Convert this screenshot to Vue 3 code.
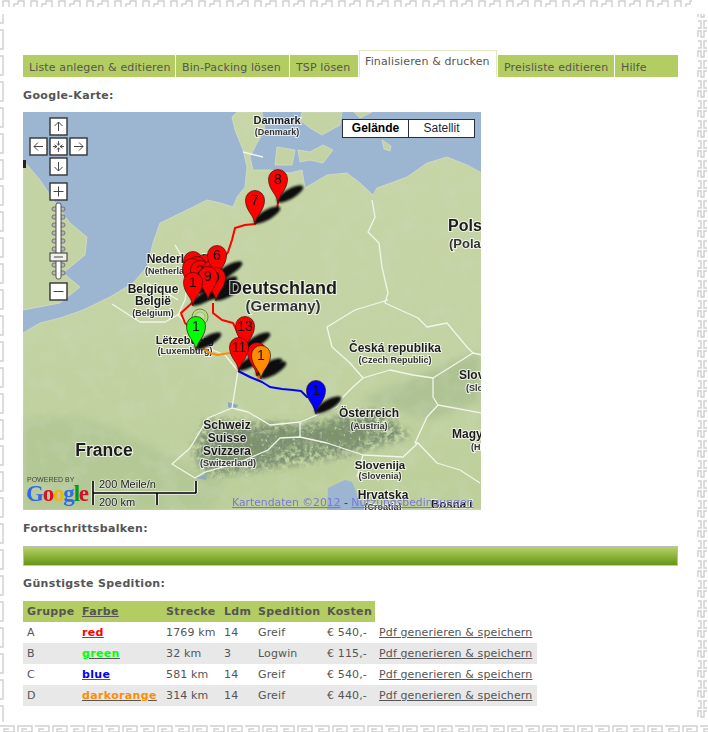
<script setup>
const tabs = [
  { label: 'Liste anlegen & editieren', width: 152 },
  { label: 'Bin-Packing lösen', width: 113 },
  { label: 'TSP lösen', width: 68 },
  { label: 'Finalisieren & drucken', width: 138, active: true },
  { label: 'Preisliste editieren', width: 116 },
  { label: 'Hilfe', width: 63 },
]

const rows = [
  { group: 'A', color: 'red', tone: '#ff0000', route: '1769 km', ldm: 14, carrier: 'Greif', cost: '€ 540,-' },
  { group: 'B', color: 'green', tone: '#00ff00', route: '32 km', ldm: 3, carrier: 'Logwin', cost: '€ 115,-' },
  { group: 'C', color: 'blue', tone: '#0000ff', route: '581 km', ldm: 14, carrier: 'Greif', cost: '€ 540,-' },
  { group: 'D', color: 'darkorange', tone: '#ff8c00', route: '314 km', ldm: 14, carrier: 'Greif', cost: '€ 440,-' },
]

// tip of every pin in page coordinates, the map viewBox starts at 23/112
const pins = [
  { x: 278, y: 203, n: '8', c: '#ff0000' },
  { x: 255, y: 224, n: '7', c: '#ff0000' },
  { x: 193, y: 285, n: '', c: '#ff0000' },
  { x: 205, y: 288, n: '', c: '#ff0000' },
  { x: 197, y: 290, n: '', c: '#ff0000' },
  { x: 192, y: 292, n: '', c: '#ff0000' },
  { x: 200, y: 294, n: '2', c: '#ff0000' },
  { x: 212, y: 294, n: '', c: '#ff0000' },
  { x: 217, y: 279, n: '6', c: '#ff0000' },
  { x: 216, y: 301, n: '0', c: '#ff0000' },
  { x: 208, y: 300, n: '9', c: '#ff0000' },
  { x: 193, y: 306, n: '1', c: '#ff0000' },
  { x: 245, y: 350, n: '13', c: '#ff0000' },
  { x: 257, y: 376, n: '', c: '#ff0000' },
  { x: 239, y: 371, n: '11', c: '#ff0000' },
  { x: 261, y: 379, n: '1', c: '#ff8c00' },
  { x: 196, y: 350, n: '1', c: '#00ff00' },
  { x: 316, y: 414, n: '1', c: '#0000ff' },
]

const toPath = (points) => 'M' + points.replace(/ M/g, 'M').replace(/ /g, 'L')

const continent = 'M23 333 40 323 60 318 83 310 110 297 133 283 147 267 153 243 160 223 187 210 207 200 220 203 233 207 237 197 245 187 247 167 243 150 235 130 232 117 237 112H262L265 130 257 143 250 157 253 170 270 170 290 173 302 170 305 188 327 175 347 173 360 183 373 195 377 188 407 177 427 163 447 157 467 165 482 173V510H23Z'
const alps = 'M206 420 300 425 378 410 412 436 345 456 262 470 206 476 192 450Z'

const redRoute = toPath('278,202 277,210 273,212 266,213 262,218 255,224 245,225 235,228 232,240 228,252 224,258 217,278 M213,303 213,313 222,320 233,323 238,333 245,350 M193,305 192,303 181,313 185,323 193,330 M245,350 241,358 239,370')
const orangeRoute = toPath('203,348 208,352 217,355 230,353 239,350 M257,373 258,379 261,378')
const blueRoute = toPath('238,371 250,377 262,382 270,387 282,389 293,390 301,391 307,397 315,398 313,404 316,412')
const borders = [
  '372,200 375,217 368,232 379,243 382,267 388,293 385,303 418,318 427,327 447,323 467,347 473,353 457,363 433,378 413,375 390,370 363,378 350,363 332,347 327,327 355,310 388,300',
  '363,378 353,387 343,397 337,407 317,415 300,422 270,425 248,412 232,408 238,371 225,355 203,346 192,330 178,315 185,300 190,270 175,245',
  '147,283 165,292 178,300 M181,313 165,322 140,322 112,304',
  '232,408 208,418 190,448 172,464 195,478 205,472 240,462 268,450 280,438 300,437 327,443 363,455 403,457 418,443 437,463 460,470 480,483',
  '433,378 433,397 438,405 482,413 M438,405 427,417 415,443 418,443',
  '473,353 482,355 M300,422 300,437 M363,455 357,477 M243,152 263,157',
].map(toPath)
</script>

<template>
  <div class="page">
    <svg class="frame" width="708" height="732" aria-hidden="true">
      <defs>
        <pattern id="meander-top" width="28" height="8" patternUnits="userSpaceOnUse">
          <path d="M3 7V1H9V7M14 7V4H18V1H24V7" />
        </pattern>
        <pattern id="meander-left" width="8" height="26" patternUnits="userSpaceOnUse">
          <path d="M0 4H3V23H0" />
        </pattern>
        <pattern id="meander-right" x="697" width="12" height="20" patternUnits="userSpaceOnUse">
          <path d="M1 1H4V8H1M10 1H7V8H10M1 17V11H4V17H7V11H10" />
        </pattern>
        <pattern id="meander-bottom" y="725" width="35" height="8" patternUnits="userSpaceOnUse">
          <path d="M0 1H14V7H4V4H9M18 7V1H32V7H22V4H27" />
        </pattern>
      </defs>
      <rect x="0" y="0" width="692" height="7" fill="url(#meander-top)" />
      <rect x="0" y="14" width="8" height="708" fill="url(#meander-left)" />
      <rect x="697" y="14" width="11" height="706" fill="url(#meander-right)" />
      <rect x="0" y="725" width="708" height="7" fill="url(#meander-bottom)" />
    </svg>

    <main class="content">
      <nav class="tabs">
        <a
          v-for="tab in tabs"
          :key="tab.label"
          class="tab"
          :class="{ 'tab--active': tab.active }"
          :style="{ width: tab.width + 'px' }"
        >{{ tab.label }}</a>
      </nav>

      <h2 class="heading heading--map">Google-Karte:</h2>

      <div class="map">
        <svg class="map__canvas" viewBox="23 112 458 398" width="458" height="398">
          <defs>
            <linearGradient id="land-tone" x1="0" y1="0" x2="0" y2="1">
              <stop offset="0" stop-color="#c6d6a6" />
              <stop offset="0.55" stop-color="#c3d3a3" />
              <stop offset="1" stop-color="#bccf9a" />
            </linearGradient>
            <filter id="soft" x="-30%" y="-30%" width="160%" height="160%">
              <feGaussianBlur stdDeviation="4" />
            </filter>
            <filter id="shadow-blur" x="-30%" y="-60%" width="160%" height="220%">
              <feGaussianBlur stdDeviation="1.3" />
            </filter>
            <filter id="rock" x="-10%" y="-10%" width="120%" height="120%">
              <feGaussianBlur in="SourceAlpha" stdDeviation="4" result="mask" />
              <feTurbulence type="fractalNoise" baseFrequency="0.2" numOctaves="3" seed="4" />
              <feColorMatrix values="0 0 0 0 0.2  0 0 0 0 0.28  0 0 0 0 0.17  3.4 0 0 0 -1.1" />
              <feComposite in2="mask" operator="in" />
            </filter>
            <filter id="ridge" x="-10%" y="-10%" width="120%" height="120%">
              <feGaussianBlur in="SourceAlpha" stdDeviation="4" result="mask" />
              <feTurbulence type="fractalNoise" baseFrequency="0.26" numOctaves="2" seed="11" />
              <feColorMatrix values="0 0 0 0 0.9  0 0 0 0 0.93  0 0 0 0 0.85  3 0 0 0 -1.95" />
              <feComposite in2="mask" operator="in" />
            </filter>
            <filter id="speckle" x="0" y="0" width="100%" height="100%">
              <feTurbulence type="fractalNoise" baseFrequency="0.05" numOctaves="3" seed="9" />
              <feColorMatrix values="0 0 0 0 0.6  0 0 0 0 0.7  0 0 0 0 0.5  1.6 0 0 0 -0.7" />
              <feComposite in2="SourceGraphic" operator="in" />
            </filter>
          </defs>

          <rect x="23" y="112" width="458" height="398" fill="#9cb5d0" />

          <!-- land -->
          <path class="land" fill="url(#land-tone)" :d="continent" />
          <path class="land" fill="#c3d3a3" d="M23 160 40 180 53 200 70 223 87 237 85 255 63 273 80 287 60 303 23 310Z" />
          <path class="land" fill="#c3d3a3" d="M277 147 295 150 292 165 275 165ZM298 150 310 152 323 145 333 150 323 163 310 160 300 162ZM302 112H342L340 125 322 135 310 128 300 120ZM354 112H372L360 118ZM382 140 391 146 390 151 384 149Z" />

          <!-- relief -->
          <path fill="#b4c896" filter="url(#soft)" d="M23 420C120 400 160 470 230 480L210 510H23Z" />
          <path fill="#aec293" filter="url(#soft)" d="M362 400 480 350V400L430 420Z" />
          <path fill="#7f9468" filter="url(#soft)" d="M212 426 260 428 300 430 345 420 385 432 345 450 300 444 262 460 228 468 205 466Z" />
          <path filter="url(#speckle)" fill="#000" :d="continent" opacity=".5" />
          <path filter="url(#rock)" fill="#000" :d="alps" />
          <path filter="url(#ridge)" fill="#000" :d="alps" />
          <path fill="#9cb5d0" d="M327 510 328 488 345 480 352 482 357 494 366 510Z" />
          <path fill="#8fa9bf" d="M228 402 238 405 235 410 228 407ZM195 478 207 474 206 480Z" />
          <rect x="23" y="160" width="3" height="8" fill="#222" />

          <path v-for="line in borders" :key="line" class="border" :d="line" />

          <!-- place names -->
          <text class="place" x="277" y="124" font-size="11">Danmark</text>
          <text class="place place--sub" x="277" y="135" font-size="9">(Denmark)</text>
          <text class="place" x="176" y="263" font-size="12">Nederland</text>
          <text class="place place--sub" x="174" y="274" font-size="9">(Netherlands)</text>
          <text class="place" x="153" y="293" font-size="12">Belgique</text>
          <text class="place" x="153" y="305" font-size="12">België</text>
          <text class="place place--sub" x="153" y="316" font-size="9">(Belgium)</text>
          <text class="place place--start" x="448" y="231" font-size="16">Polska</text>
          <text class="place place--sub place--start" x="449" y="248" font-size="13">(Poland)</text>
          <text class="place" x="185" y="344" font-size="11">Lëtzebuerg</text>
          <text class="place place--sub" x="185" y="354" font-size="9">(Luxemburg)</text>
          <text class="place" x="395" y="352" font-size="12">Česká republika</text>
          <text class="place place--sub" x="395" y="363" font-size="9">(Czech Republic)</text>
          <text class="place place--start" x="459" y="379" font-size="12">Slovensko</text>
          <text class="place place--sub place--start" x="466" y="391" font-size="9">(Slovakia)</text>
          <text class="place" x="369" y="417" font-size="12">Österreich</text>
          <text class="place place--sub" x="369" y="429" font-size="9">(Austria)</text>
          <text class="place place--start" x="452" y="438" font-size="12">Magyarország</text>
          <text class="place place--sub place--start" x="471" y="450" font-size="9">(Hungary)</text>
          <text class="place" x="104" y="456" font-size="17.500">France</text>
          <text class="place" x="227" y="429" font-size="12">Schweiz</text>
          <text class="place" x="227" y="442" font-size="12">Suisse</text>
          <text class="place" x="227" y="455" font-size="12">Svizzera</text>
          <text class="place place--sub" x="228" y="466" font-size="9">(Switzerland)</text>
          <text class="place" x="380" y="469" font-size="11.500">Slovenija</text>
          <text class="place place--sub" x="380" y="479" font-size="9">(Slovenia)</text>
          <text class="place" x="383" y="499" font-size="12">Hrvatska</text>
          <text class="place place--sub" x="383" y="510" font-size="9">(Croatia)</text>

          <!-- routes and pins -->
          <path class="route" stroke="#f00" :d="redRoute" />
          <path class="route" stroke="#ff8c00" :d="orangeRoute" />
          <path class="route" stroke="#00f" :d="blueRoute" />

          <ellipse
            v-for="pin in pins"
            :key="'s' + pin.x + pin.y"
            class="pin__shadow"
            cx="0"
            cy="0"
            rx="15"
            ry="5"
            filter="url(#shadow-blur)"
            :transform="`translate(${pin.x + 12} ${pin.y - 9}) rotate(-30)`"
          />
          <text class="place" x="283" y="294" font-size="18">Deutschland</text>
          <text class="place place--sub" x="283" y="311" font-size="15">(Germany)</text>
          <circle cx="200" cy="317" r="8" fill="#b9dd80" stroke="#6e8a50" />
          <circle cx="200" cy="317" r="5" fill="#c8dca0" stroke="#8da36a" stroke-width=".6" />
          <g v-for="pin in pins" :key="pin.x + '-' + pin.y" :transform="`translate(${pin.x} ${pin.y})`">
            <path
              class="pin"
              :fill="pin.c"
              d="M0 0C-1-9-9.500-13-9.500-24A9.500 9.500 0 1 1 9.500-24C9.500-13 1-9 0 0Z"
            />
            <text class="pin__label" y="-19">{{ pin.n }}</text>
          </g>

          <!-- map furniture -->
          <g transform="translate(0 -1)">
            <g class="nav-btn">
              <rect x="50" y="119" width="17" height="17" />
              <rect x="30" y="139" width="17" height="17" />
              <rect x="50" y="139" width="17" height="17" />
              <rect x="70" y="139" width="17" height="17" />
              <rect x="50" y="159" width="17" height="17" />
              <rect x="50" y="184" width="17" height="17" />
              <rect x="50" y="284" width="17" height="17" />
            </g>
            <path
              class="nav-glyph"
              d="M58.5 132V123M54.5 127 58.5 123 62.5 127M43 147.500H34M38 143.500 34 147.500 38 151.500M74 147.500H83M79 143.500 83 147.500 79 151.500M58.500 163V172M54.500 168 58.500 172 62.500 168M53.500 192.500H63.500M58.500 187.500V197.500M53.500 292.500H63.500"
            />
            <path
              class="nav-glyph nav-glyph--hub"
              d="M58.500 142V146M56.800 144.500 58.500 146 60.200 144.500M58.500 153V149M56.800 150.500 58.500 149 60.200 150.500M53 147.500H57M54.500 145.800 57 147.500 54.500 149.200M64 147.500H60M62.500 145.800 60 147.500 62.500 149.200"
            />
            <g class="slider">
              <rect
                v-for="tick in [208, 216, 224, 232, 240, 248, 256, 264, 272]"
                :key="tick"
                class="slider__tick"
                x="52"
                :y="tick"
                width="13"
                height="4"
                rx="2"
              />
              <rect class="slider__rail" x="56" y="204" width="5" height="76" rx="2" />
              <rect class="slider__knob" x="50" y="254" width="17" height="8" />
              <path class="nav-glyph" d="M54 258H63" />
            </g>
          </g>

          <text class="powered" x="27" y="482">POWERED BY</text>
          <text class="google" x="26" y="501">
            <tspan fill="#3369e8">G</tspan><tspan fill="#d50f25">o</tspan><tspan fill="#eeb211">o</tspan><tspan fill="#3369e8">g</tspan><tspan fill="#009925">l</tspan><tspan fill="#d50f25">e</tspan>
          </text>
          <path class="scale scale--halo" d="M93 481V505M93 493H196M196 481V493M157 493V505" />
          <path class="scale" d="M93 481V505M93 493H196M196 481V493M157 493V505" />
          <text class="scale__text" x="99" y="488">200 Meile/n</text>
          <text class="scale__text" x="99" y="506">200 km</text>
          <text class="place place--start" x="431" y="508" font-size="11.500">Bosna i</text>
          <text class="terms" x="232" y="506">
            <tspan class="terms__link">Kartendaten ©2012</tspan><tspan> - </tspan><tspan class="terms__link">Nutzungsbedingungen</tspan>
          </text>
        </svg>

        <div class="map-type">
          <span class="map-type__btn map-type__btn--on">Gelände</span>
          <span class="map-type__btn">Satellit</span>
        </div>
      </div>

      <h2 class="heading heading--progress">Fortschrittsbalken:</h2>
      <div class="progress"></div>

      <h2 class="heading heading--carrier">Günstigste Spedition:</h2>
      <table class="carriers">
        <colgroup>
          <col class="c1" /><col class="c2" /><col class="c3" /><col class="c4" />
          <col class="c5" /><col class="c6" /><col class="c7" />
        </colgroup>
        <thead>
          <tr>
            <th>Gruppe</th>
            <th><a class="sort">Farbe</a></th>
            <th>Strecke</th>
            <th>Ldm</th>
            <th>Spedition</th>
            <th>Kosten</th>
            <th class="carriers__blank"></th>
          </tr>
        </thead>
        <tbody>
          <tr v-for="row in rows" :key="row.group">
            <td>{{ row.group }}</td>
            <td><a class="swatch" :style="{ color: row.tone }">{{ row.color }}</a></td>
            <td>{{ row.route }}</td>
            <td>{{ row.ldm }}</td>
            <td>{{ row.carrier }}</td>
            <td>{{ row.cost }}</td>
            <td><a class="pdf">Pdf generieren &amp; speichern</a></td>
          </tr>
        </tbody>
      </table>
    </main>
  </div>
</template>

<style>
html,
body {
  background: #fff;
}
</style>

<style scoped>
/* page */
.page {
  position: relative;
  width: 708px;
  height: 732px;
  overflow: hidden;
  font-family: "DejaVu Sans", Verdana, sans-serif;
  font-size: 11px;
  letter-spacing: 0.13px;
  color: #555;
}

.frame {
  position: absolute;
  inset: 0;
}

.frame path {
  fill: none;
  stroke: #cfcfcf;
  stroke-width: 1.4;
}

.content {
  position: relative;
  width: 655px;
  margin-left: 23px;
  padding-top: 50px;
}

/* tabs */
.tabs {
  display: flex;
  align-items: flex-end;
  height: 27px;
  gap: 1px;
}

.tab {
  box-sizing: border-box;
  height: 22px;
  padding: 6px 0 0 6px;
  background: #b3cd62;
  color: #555;
  line-height: 14px;
  white-space: nowrap;
}

.tab--active {
  height: 27px;
  padding: 4px 0 0 5px;
  background: #fff;
  border: 1px solid #dfe8c0;
  border-bottom: none;
}

/* headings */
.heading {
  margin: 0;
  font-size: 11px;
  line-height: 14px;
  font-weight: bold;
  letter-spacing: 0.35px;
  color: #555;
}

.heading--map {
  padding: 12px 0 9px;
}

.heading--progress {
  padding: 12px 0 10px;
}

.heading--carrier {
  padding: 11px 0 10px;
}

/* map */
.map {
  position: relative;
  width: 458px;
  height: 398px;
  overflow: hidden;
  letter-spacing: 0;
}

.map__canvas {
  display: block;
  filter: blur(0.35px);
}

.land {
  stroke: #d5dcc6;
  stroke-width: 0.8;
}

.border {
  fill: none;
  stroke: #f2f5ea;
  stroke-width: 1.3;
  stroke-linejoin: round;
}

.place {
  font-family: "Liberation Sans", Arial, sans-serif;
  font-weight: bold;
  fill: #1c1c1c;
  stroke: rgba(255, 255, 255, 0.7);
  stroke-width: 2;
  paint-order: stroke;
  text-anchor: middle;
}

.place--sub {
  fill: #333;
}

.place--start {
  text-anchor: start;
}

.route {
  fill: none;
  stroke-width: 2;
  stroke-linejoin: round;
}

.pin {
  stroke: #3a1010;
  stroke-width: 0.7;
}

.pin__shadow {
  fill: #111;
}

.pin__label {
  font-family: "Liberation Sans", Arial, sans-serif;
  font-size: 14px;
  fill: #111;
  text-anchor: middle;
}

.nav-btn rect {
  fill: #fff;
  stroke: #333;
  stroke-width: 1.4;
}

.nav-glyph {
  fill: none;
  stroke: #444;
  stroke-width: 1;
}

.nav-glyph--hub {
  stroke-width: 0.9;
}

.slider__tick {
  fill: #b9b9b4;
  stroke: #555;
  stroke-width: 0.7;
}

.slider__rail {
  fill: #fff;
  stroke: #444;
  stroke-width: 0.9;
}

.slider__knob {
  fill: #f1f1ec;
  stroke: #333;
}

.powered {
  font-family: "Liberation Sans", Arial, sans-serif;
  font-size: 7px;
  fill: #444;
}

.google {
  font-family: "Liberation Serif", "Times New Roman", serif;
  font-size: 23px;
  font-weight: bold;
  letter-spacing: -1.2px;
}

.scale {
  fill: none;
  stroke: #000;
  stroke-width: 1.6;
}

.scale--halo {
  stroke: #fff;
  stroke-width: 3.6;
  opacity: 0.75;
}

.scale__text {
  font-family: "Liberation Sans", Arial, sans-serif;
  font-size: 11px;
  fill: #222;
  stroke: rgba(255, 255, 255, 0.5);
  stroke-width: 1.5;
  paint-order: stroke;
}

.terms {
  font-family: "DejaVu Sans", Verdana, sans-serif;
  font-size: 10.800px;
  fill: #333;
}

.terms__link {
  fill: #7a78d6;
  text-decoration: underline;
}

.map-type {
  position: absolute;
  top: 7px;
  left: 319px;
  display: flex;
  box-sizing: border-box;
  width: 133px;
  height: 19px;
  border: 1.5px solid #2c2c3c;
  background: #fff;
  font-family: "Liberation Sans", Arial, sans-serif;
  font-size: 12px;
  line-height: 16px;
  color: #1f1f3a;
}

.map-type__btn {
  flex: 1;
  text-align: center;
}

.map-type__btn--on {
  flex: none;
  width: 65px;
  border-right: 1.5px solid #2c2c3c;
  font-weight: bold;
  color: #000;
}

/* progress */
.progress {
  box-sizing: border-box;
  height: 20px;
  border: 1px solid #bdbdbd;
  border-bottom: 1px solid #c8c8c8;
  background: linear-gradient(#b7d26a, #86ad35 60%, #679517);
}

/* table */
.carriers {
  table-layout: fixed;
  width: 514px;
  border-collapse: collapse;
  font-size: 11px;
  color: #555;
}

.c1 { width: 55px; }
.c2 { width: 84px; }
.c3 { width: 58px; }
.c4 { width: 34px; }
.c5 { width: 69px; }
.c6 { width: 52px; }
.c7 { width: 162px; }

.carriers th,
.carriers td {
  box-sizing: border-box;
  height: 21px;
  padding: 0 0 0 4px;
  text-align: left;
  white-space: nowrap;
}

.carriers th {
  background: #b3cd62;
  font-weight: bold;
  letter-spacing: 0.35px;
}

.carriers th.carriers__blank {
  background: none;
}

.carriers tbody tr:nth-child(even) {
  background: #e8e8e8;
}

.sort {
  text-decoration: underline;
}

.swatch {
  font-weight: bold;
  letter-spacing: 0.35px;
  text-decoration: underline;
  text-decoration-color: #555;
}

.pdf {
  color: #555;
  text-decoration: underline;
}
</style>
